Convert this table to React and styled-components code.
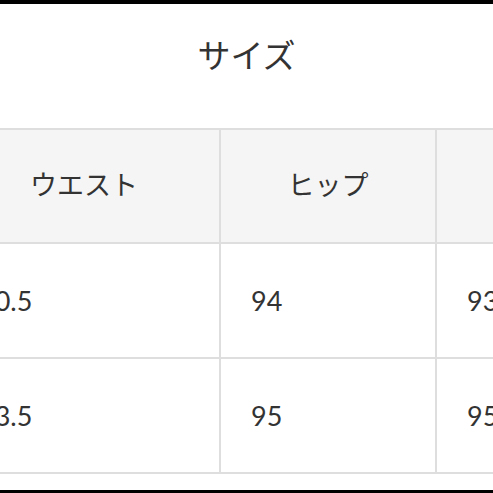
import React from "react";
import styled, { createGlobalStyle } from "styled-components";

const Global = createGlobalStyle`
  html, body { margin: 0; padding: 0; background: #fff; }
  body { font-family: Lato, "Noto Sans CJK JP", sans-serif; color: #333; overflow: hidden; }
`;

const Frame = styled.div`
  width: 493px;
  height: 493px;
  display: flex;
  flex-direction: column;
  border-top: 4px solid #000;
  border-bottom: 3px solid #000;
  box-sizing: border-box;
  overflow: hidden;
`;

const Title = styled.h2`
  margin: 0;
  height: 124px;
  display: flex;
  align-items: center;
  justify-content: center;
  padding-bottom: 24px;
  box-sizing: border-box;
  font-family: "Noto Sans CJK JP", sans-serif;
  font-weight: 400;
  font-size: 33px;
  color: #333;
`;

const Table = styled.table`
  border-collapse: collapse;
  margin-left: -53px;
  table-layout: fixed;
  width: 707px;
`;

const Cell = styled.td`
  border: 2px solid #dedede;
  height: 113px;
  padding: 0 0 0 30px;
  font-family: Lato, "Noto Sans CJK JP", sans-serif;
  font-size: 27px;
  color: #333;
  text-align: left;
  vertical-align: middle;
`;

const Head = styled.th`
  border: 2px solid #dedede;
  height: 106px;
  padding: 0 0 6px;
  background: #f5f5f5;
  font-family: "Noto Sans CJK JP", sans-serif;
  font-weight: 400;
  font-size: 27px;
  color: #333;
  text-align: center;
  vertical-align: middle;
`;

const rows = [
  ["80.5", "94", "93"],
  ["83.5", "95", "95"],
];

export default function App() {
  return (
    <>
      <Global />
      <Frame>
        <Title>サイズ</Title>
        <Table>
          <colgroup>
            <col style={{ width: 272 }} />
            <col style={{ width: 216 }} />
            <col style={{ width: 219 }} />
          </colgroup>
          <thead>
            <tr>
              <Head>ウエスト</Head>
              <Head>ヒップ</Head>
              <Head>股上</Head>
            </tr>
          </thead>
          <tbody>
            {rows.map((r, i) => (
              <tr key={i}>
                {r.map((v, j) => (
                  <Cell key={j}>{v}</Cell>
                ))}
              </tr>
            ))}
          </tbody>
        </Table>
      </Frame>
    </>
  );
}
